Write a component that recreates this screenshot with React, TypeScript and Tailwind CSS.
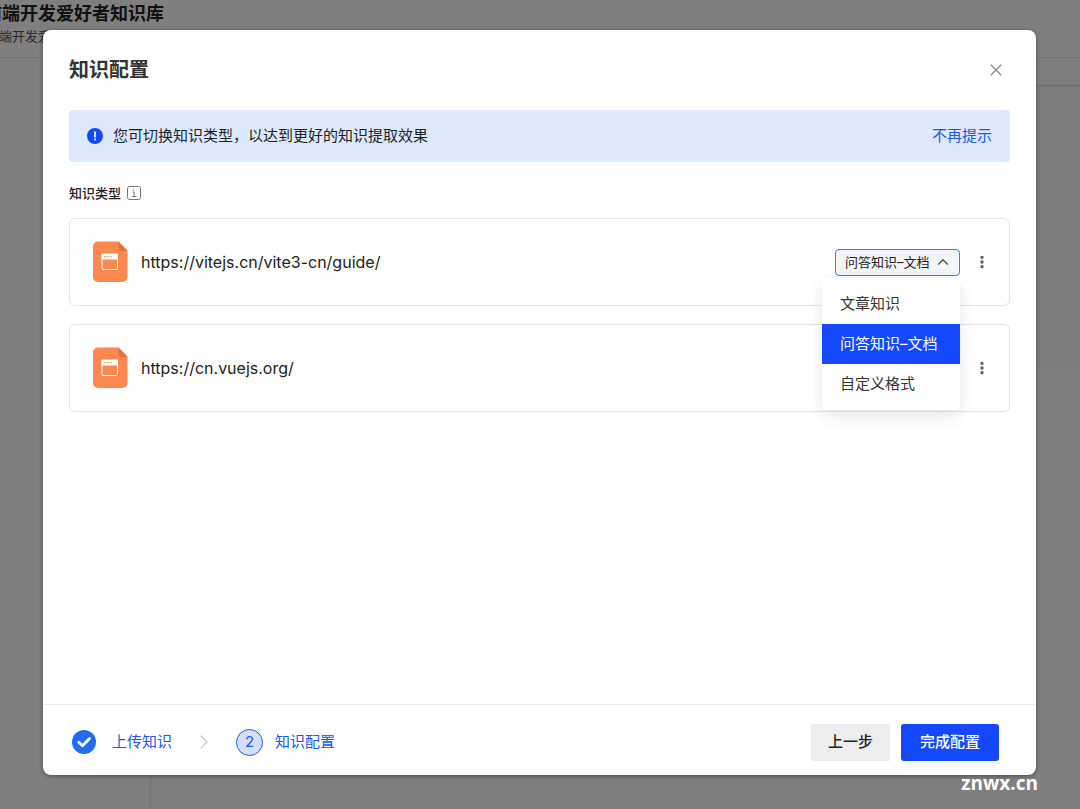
import { useState } from 'react'
import { ChevronUp, ChevronRight, X, EllipsisVertical } from 'lucide-react'

interface SourceItem {
  id: string
  url: string
}

const sources: SourceItem[] = [
  { id: 'vite', url: 'https://vitejs.cn/vite3-cn/guide/' },
  { id: 'vue', url: 'https://cn.vuejs.org/' },
]

const knowledgeTypes = ['文章知识', '问答知识–文档', '自定义格式']

function WebFileIcon() {
  return (
    <svg width="35" height="42" viewBox="0 0 35 42" className="shrink-0" aria-hidden="true">
      <path d="M5 0.5h20.500L34.500 9.500v26.500a5 5 0 0 1-5 5H5a5 5 0 0 1-5-5V5.500a5 5 0 0 1 5-5z" fill="#fb884e" />
      <path d="M25.500 0.500L34.500 10h-5.500a3.500 3.500 0 0 1-3.500-3.500z" fill="#e8703a" />
      <rect x="9" y="13.500" width="15.500" height="15" rx="1" fill="none" stroke="#fff" strokeWidth="1" />
      <path d="M8.500 13.500a1 1 0 0 1 1-1H24a1 1 0 0 1 1 1v5H8.500z" fill="#fff" />
      <path d="M11 15.500h1.500M14 15.500h1.500M17 15.500h1.500" stroke="#fb884e" strokeWidth="1.200" />
    </svg>
  )
}

function InfoBoxIcon() {
  return (
    <svg width="14" height="14" viewBox="0 0 14 14" fill="none" stroke="#777" aria-hidden="true">
      <rect x="0.500" y="0.500" width="13" height="13" rx="2" />
      <path d="M5.500 6h1.700v4.500M5 10.500h4.300M6.700 3.300v1.200" />
    </svg>
  )
}

function AlertIcon() {
  return (
    <svg width="16" height="16" viewBox="0 0 16 16" className="shrink-0" aria-hidden="true">
      <circle cx="8" cy="8" r="8" fill="#1349fb" />
      <path d="M8 4v4.800" stroke="#fff" strokeWidth="1.700" strokeLinecap="round" />
      <circle cx="8" cy="11.500" r="1" fill="#fff" />
    </svg>
  )
}

function CheckIcon() {
  return (
    <svg width="24" height="24" viewBox="0 0 24 24" aria-hidden="true">
      <circle cx="12" cy="12" r="12" fill="#216cf0" />
      <path d="M6.800 12.300l3.700 3.500 7-7.300" fill="none" stroke="#fff" strokeWidth="2.800" strokeLinecap="round" strokeLinejoin="round" />
    </svg>
  )
}

// Page that sits behind the dialog
function KnowledgeBasePage() {
  return (
    <div className="flex min-h-screen flex-col bg-white">
      <header className="h-[58px] border-b border-[#e4e4e4] overflow-hidden">
        <div className="-ml-4 whitespace-nowrap">
          <h1 className="pt-0.5 text-[18px] leading-6 font-bold text-[#222]">前端开发爱好者知识库</h1>
          <p className="pl-0.5 text-[13px] leading-5 text-[#555]">前端开发爱好者知识库</p>
        </div>
      </header>
      <div className="flex flex-1">
        <aside className="w-[151px] border-r border-[#e4e4e4]" />
        <main className="flex-1">
          <div className="h-7 border-b border-[#dcdcdc]" />
          <div className="h-[282px] bg-[#f5f5f5]" />
        </main>
      </div>
    </div>
  )
}

interface TypeSelectProps {
  id: string
  defaultOpen?: boolean
}

function TypeSelect({ id, defaultOpen = false }: TypeSelectProps) {
  const [open, setOpen] = useState(defaultOpen)
  const [value, setValue] = useState(knowledgeTypes[1])

  return (
    <div className="relative">
      <div className="flex h-[27px] w-[125px] items-center rounded border border-[#3b7cf0] bg-[#f3f4f6] pr-[7px] pl-[9px]">
        <select
          aria-label="知识类型"
          id={id}
          value={value}
          onChange={(e) => setValue(e.target.value)}
          className="min-w-0 flex-1 appearance-none bg-transparent text-[13px] leading-5 text-[#222] outline-none"
        >
          {knowledgeTypes.map((type) => (
            <option key={type}>{type}</option>
          ))}
        </select>
        <ChevronUp className="h-[18px] w-[18px] shrink-0 text-[#444]" strokeWidth={1.5} />
      </div>
      {open && (
        <ul className="absolute top-[29px] right-0 z-10 w-[138px] rounded bg-white py-1.5 shadow-[0_6px_16px_rgba(0,0,0,0.10)]">
          {knowledgeTypes.map((type) => (
            <li key={type}>
              <button
                type="button"
                onClick={() => {
                  setValue(type)
                  setOpen(false)
                }}
                className={`h-10 w-full pt-0.5 pl-[18px] text-left text-[15px] ${type === value ? 'bg-[#1349fb] text-white' : 'text-[#333]'}`}
              >
                {type}
              </button>
            </li>
          ))}
        </ul>
      )}
    </div>
  )
}

export default function App() {
  return (
    <div className="relative min-h-screen overflow-hidden font-['Inter','Noto_Sans_CJK_SC',sans-serif]">
      <KnowledgeBasePage />

      <div className="absolute inset-0 flex bg-black/50 pt-[30px] pr-11 pb-[34px] pl-[43px]">
        <section
          role="dialog"
          aria-labelledby="dialog-title"
          className="flex flex-1 flex-col rounded-lg bg-white shadow-[0_1px_4px_rgba(0,0,0,0.4)]"
        >
          <div className="flex h-20 items-center justify-between pr-[30px] pl-[26px]">
            <h2 id="dialog-title" className="text-[20px] leading-7 font-semibold text-[#333]">知识配置</h2>
            <button type="button" aria-label="关闭" className="text-[#888]">
              <X className="h-5 w-5" strokeWidth={1.5} />
            </button>
          </div>

          <div className="flex-1 px-[26px]">
            <div className="flex h-[52px] items-center rounded bg-[#dde9fb] px-[18px]">
              <AlertIcon />
              <p className="ml-2.5 flex-1 text-[15px] text-[#1a1f2b]">您可切换知识类型，以达到更好的知识提取效果</p>
              <button type="button" className="text-[15px] text-[#2156e8]">不再提示</button>
            </div>

            <div className="mt-[19px] flex items-center gap-1.5">
              <h3 className="text-[13px] leading-6 font-medium text-[#222]">知识类型</h3>
              <InfoBoxIcon />
            </div>

            <ul className="mt-[13px] flex flex-col gap-[18px]">
              {sources.map((source, i) => (
                <li key={source.id} className="flex h-[88px] items-center rounded-md border border-[#e5e5e5] pr-[19px] pl-[23px]">
                  <WebFileIcon />
                  <a href={source.url} className="ml-[13px] flex-1 text-[16px] text-[#222]">{source.url}</a>
                  <TypeSelect id={`type-${source.id}`} defaultOpen={i === 0} />
                  <button type="button" aria-label="更多" className="ml-3.5 text-[#555]">
                    <EllipsisVertical className="h-4 w-4" strokeWidth={3} />
                  </button>
                </li>
              ))}
            </ul>
          </div>

          <footer className="flex h-[71px] items-center border-t border-[#ececec] pt-1.5 pr-[37px] pb-0.5 pl-[29px] text-[15px]">
            <ol className="flex flex-1 items-center text-[#2156e8]">
              <li className="flex items-center gap-4">
                <CheckIcon />
                <span>上传知识</span>
              </li>
              <li className="flex items-center">
                <ChevronRight className="mx-5 h-6 w-6 text-[#ccc]" strokeWidth={1.5} />
                <span className="flex h-[27px] w-[27px] items-center justify-center rounded-full border border-[#2156e8] bg-[#d3dffc]">2</span>
                <span className="ml-3">知识配置</span>
              </li>
            </ol>
            <button type="button" className="h-[37px] w-[79px] rounded-xs bg-[#ededf0] font-medium text-[#222]">上一步</button>
            <button type="button" className="ml-[11px] h-[37px] w-[98px] rounded-[3px] bg-[#1349fb] font-medium text-white">完成配置</button>
          </footer>
        </section>
        <span className="absolute right-[42px] bottom-3.5 font-['Open_Sans',sans-serif] text-[19px] leading-6 font-bold text-white">znwx.cn</span>
      </div>
    </div>
  )
}
